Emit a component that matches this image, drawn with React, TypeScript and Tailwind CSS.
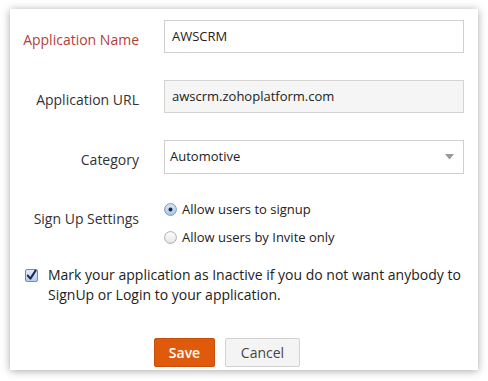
import React from "react";

const font = { fontFamily: '"Open Sans", "Noto Sans", Arial, sans-serif' };

function Radio({ checked }: { checked?: boolean }) {
  return (
    <svg width="13" height="13" viewBox="0 0 13 13" className="shrink-0">
      <defs>
        <linearGradient id={checked ? "rc" : "ru"} x1="0" y1="0" x2="0" y2="1">
          {checked ? (
            <>
              <stop offset="0" stopColor="#dbe8f7" />
              <stop offset="1" stopColor="#a9c6ea" />
            </>
          ) : (
            <>
              <stop offset="0" stopColor="#ffffff" />
              <stop offset="1" stopColor="#e4e4e4" />
            </>
          )}
        </linearGradient>
      </defs>
      <circle cx="6.5" cy="6.5" r="5.9" fill={`url(#${checked ? "rc" : "ru"})`} stroke={checked ? "#6f8fb8" : "#a6a6a6"} strokeWidth="0.9" />
      {checked && <circle cx="6.5" cy="6.5" r="2" fill="#1c2a44" />}
    </svg>
  );
}

function Checkbox() {
  return (
    <svg width="13" height="13" viewBox="0 0 13 13" className="shrink-0">
      <defs>
        <linearGradient id="cb" x1="0" y1="0" x2="0" y2="1">
          <stop offset="0" stopColor="#e2ecf9" />
          <stop offset="1" stopColor="#b3cdef" />
        </linearGradient>
      </defs>
      <rect x="0.5" y="0.5" width="12" height="12" rx="1.5" fill="url(#cb)" stroke="#6d8cb6" />
      <path d="M2.8 6.6 L5.4 9.6 L10.6 1.6" fill="none" stroke="#1b2850" strokeWidth="2" strokeLinecap="round" strokeLinejoin="round" />
    </svg>
  );
}

export default function App() {
  return (
    <div className="w-[488px] h-[381px] bg-white pt-[9px] pl-[10px]" style={font}>
      <div className="w-[468px] h-[361px] bg-white shadow-[0_1px_8px_rgba(0,0,0,0.35)] flex flex-col pt-[11px] text-[14px] text-[#333]">
        <div className="flex items-start">
          <div className="w-[129px] text-right leading-[20px] pt-[10px] text-[#b3403b]">Application Name</div>
          <div className="ml-[25px] w-[300px] h-[33px] border border-[#cfcfcf] bg-white flex items-center pl-[7px] text-[13px] text-[#222]">AWSCRM</div>
        </div>
        <div className="flex items-start mt-[27px]">
          <div className="w-[129px] text-right leading-[20px] pt-[10px]">Application URL</div>
          <div className="ml-[25px] w-[300px] h-[33px] border border-[#d3d3d3] bg-[#f5f5f5] flex items-center pl-[7px] text-[13px] text-[#222]">awscrm.zohoplatform.com</div>
        </div>
        <div className="flex items-start mt-[27px]">
          <div className="w-[129px] text-right leading-[20px] pt-[10px]">Category</div>
          <div className="ml-[25px] w-[300px] h-[34px] border border-[#cfcfcf] bg-white flex items-center pl-[5px] pr-[9px] text-[13px] text-[#222]">
            <span className="flex-1">Automotive</span>
            <svg width="9" height="6" viewBox="0 0 9 6"><path d="M0 0 L9 0 L4.5 5.5 Z" fill="#9a9a9a" /></svg>
          </div>
        </div>
        <div className="flex items-start mt-[25px]">
          <div className="w-[129px] text-right leading-[20px] pt-[10px]">Sign Up Settings</div>
          <div className="ml-[25px] flex flex-col gap-[8px] text-[13px] text-[#222]">
            <label className="flex items-center gap-[5px] leading-[20px]"><Radio checked /> <span>Allow users to signup</span></label>
            <label className="flex items-center gap-[5px] leading-[20px]"><Radio /> <span>Allow users by Invite only</span></label>
          </div>
        </div>
        <div className="flex items-start mt-[18px] pl-[15px] pr-[12px]">
          <div className="pt-[4px]"><Checkbox /></div>
          <p className="ml-[10px] leading-[19.5px] text-[#222]">
            Mark your application as Inactive if you do not want anybody to SignUp or Login to your application.
          </p>
        </div>
        <div className="flex mt-[34px] pl-[144px] gap-[10px]">
          <button className="w-[61px] h-[29px] bg-[#e05a0c] border border-[#c94f08] rounded-[2px] text-white font-semibold text-[14px]">Save</button>
          <button className="w-[75px] h-[29px] bg-[#f4f4f4] border border-[#d2d2d2] rounded-[2px] text-[#444] text-[14px]">Cancel</button>
        </div>
      </div>
    </div>
  );
}
